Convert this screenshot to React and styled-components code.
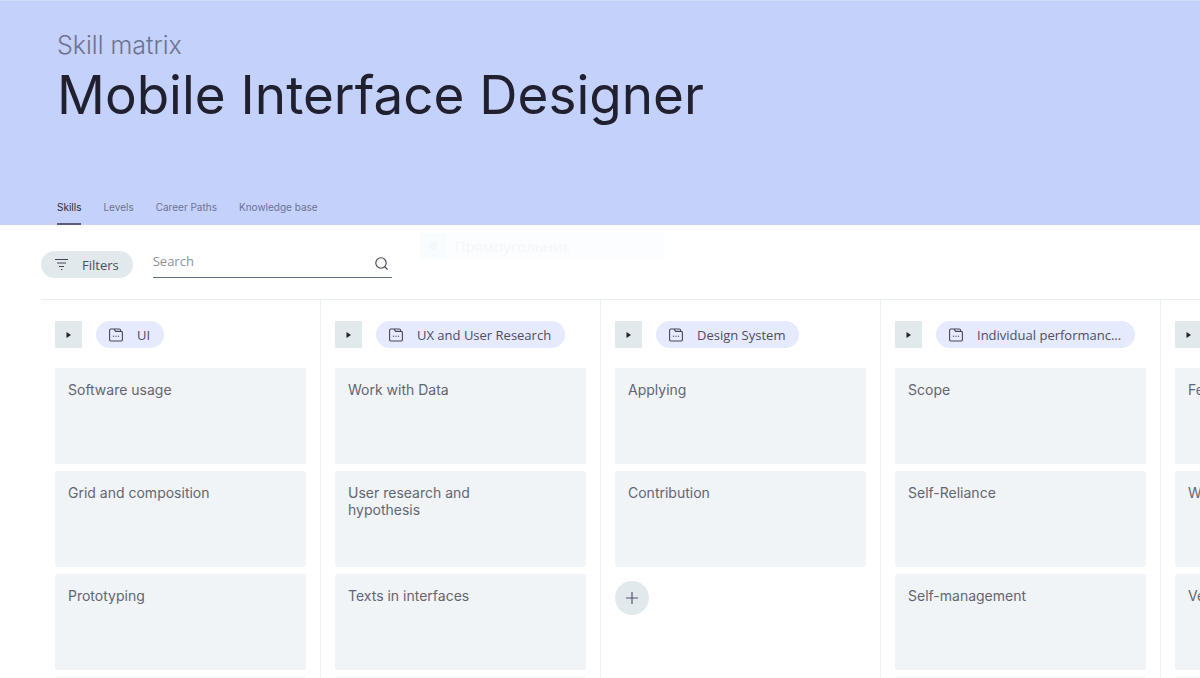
import React from 'react'
import styled, { createGlobalStyle } from 'styled-components'

const GlobalStyle = createGlobalStyle`
	* {
		box-sizing: border-box;
	}
	body {
		margin: 0;
		background: #fff;
		color: #20202f;
		font-family: Inter, "Liberation Sans", sans-serif;
	}
	button, input {
		font-family: "Open Sans", "Noto Sans", sans-serif;
		font-size: 13px;
		color: #4c4d60;
	}
	button {
		border: 0;
		padding: 0;
		cursor: pointer;
	}
`

const Page = styled.div`
	display: flex;
	flex-direction: column;
	height: 100vh;
`

const Header = styled.header`
	display: flex;
	flex-direction: column;
	flex-shrink: 0;
	padding: 29px 57px 0;
	background: #c4d1fb;
	border-top: 1px solid #d2dbfc;
`

const Subtitle = styled.p`
	margin: 0;
	font-size: 25px;
	font-weight: 300;
	line-height: 30px;
	color: #6d7392;
`

const Title = styled.h1`
	margin: 0 0 70px;
	font-size: 53px;
	font-weight: 400;
	line-height: 70px;
`

const Tabs = styled.nav`
	display: flex;
	gap: 22px;
`

const Tab = styled.a`
	height: 25px;
	font-size: 10px;
	line-height: 14px;
	text-decoration: none;
	color: ${props => (props.$active ? '#2c2c3e' : '#6d7392')};
	border-bottom: 2px solid ${props => (props.$active ? '#5b5c78' : 'transparent')};
`

const Toolbar = styled.div`
	display: flex;
	flex-shrink: 0;
	align-items: flex-end;
	gap: 20px;
	padding: 8px 41px 21px;
`

const FilterButton = styled.button`
	display: flex;
	align-items: center;
	gap: 14px;
	height: 27px;
	padding: 0 14px;
	border-radius: 14px;
	background: #e2e9ec;
`

const SearchField = styled.label`
	display: flex;
	align-items: center;
	width: 239px;
	height: 28px;
	padding-right: 4px;
	border-bottom: 1px solid #5f6f83;
`

const SearchInput = styled.input`
	flex: 1;
	min-width: 0;
	height: 27px;
	padding: 0 0 6px;
	border: 0;
	outline: 0;
	background: transparent;
	&::placeholder {
		color: #8e8f99;
		opacity: 1;
	}
`

const DragGhost = styled.div`
	display: flex;
	align-self: flex-start;
	align-items: center;
	width: 244px;
	height: 26px;
	margin: 0 0 19px 8px;
	background: #fcfdff;
	font-family: "Open Sans", "Noto Sans", sans-serif;
	font-size: 15px;
	color: #f5f6f7;
`

const DragHandle = styled.span`
	display: flex;
	align-items: center;
	justify-content: center;
	width: 26px;
	height: 26px;
	margin-right: 9px;
	background: #f8fcff;
	&::before {
		content: '';
		width: 8px;
		height: 8px;
		border-radius: 50%;
		background: #f5f6f7;
	}
`

const Board = styled.main`
	display: flex;
	flex: 1;
	min-height: 0;
	margin-left: 41px;
	border-top: 1px solid #eaeff1;
	overflow: auto;
	scrollbar-width: none;
`

const Column = styled.section`
	flex: 0 0 280px;
	height: max-content;
	min-height: 100%;
	padding: 21px 14px;
	border-right: 1px solid #eaf0f3;
`

const ColumnHead = styled.div`
	display: flex;
	gap: 14px;
	margin-bottom: 20px;
`

const ToggleButton = styled.button`
	display: flex;
	flex: 0 0 27px;
	align-items: center;
	justify-content: center;
	height: 27px;
	border-radius: 1px;
	background: #e2e9ec;
`

const Category = styled.button`
	display: flex;
	align-items: center;
	gap: 14px;
	height: 27px;
	padding: 0 14px 0 13px;
	border-radius: 14px;
	background: #e6eaff;
	white-space: nowrap;
`

const Cards = styled.ul`
	display: flex;
	flex-direction: column;
	gap: 7px;
	margin: 0;
	padding: 0;
	list-style: none;
`

const Card = styled.li`
	min-height: 96px;
	padding: 13px 80px 13px 13px;
	border-radius: 2px;
	background: #f0f4f7;
	font-size: 14px;
	line-height: 17px;
	color: #646572;
`

const AddButton = styled.button`
	display: flex;
	align-items: center;
	justify-content: center;
	width: 34px;
	height: 34px;
	margin-top: 14px;
	border-radius: 50%;
	background: #e2e9ec;
`

const FilterIcon = () => (
	<svg width="13" height="13" viewBox="0 0 13 13" fill="none" stroke="#45465a" strokeWidth="1">
		<path d="M0 1.5h13M2 5h9M4 8.5h5M6 11.5h1.4" />
	</svg>
)

const SearchIcon = () => (
	<svg width="13" height="13" viewBox="0 0 13 13" fill="none" stroke="#3c3d50" strokeWidth="1.1">
		<circle cx="6" cy="6" r="5.2" />
		<path d="M9.7 9.7l2.8 2.8" />
	</svg>
)

const ArrowIcon = () => (
	<svg width="5" height="6" viewBox="0 0 5 6">
		<path d="M.5 0L5 3L.5 6z" fill="#20202f" />
	</svg>
)

const FolderIcon = () => (
	<svg width="14" height="14" viewBox="0 0 14 14" fill="none" stroke="#45465c" strokeWidth="1.1">
		<path d="M.6 11.8V2.100Q.6 1 1.700 1h2.700q.5 0 .8.400L6.600 3.400h5.600q1.200 0 1.200 1.200v7.200q0 1.200-1.200 1.200H1.800Q.6 13 .6 11.800z" />
		<path d="M5 1h5.200q1.200 0 1.400 1.200v1" />
		<path d="M3.900 8.300h1.200M6.400 8.300h1.200M8.900 8.300h1.200" />
	</svg>
)

const PlusIcon = () => (
	<svg width="12" height="12" viewBox="0 0 12 12" stroke="#55566a" strokeWidth="1.2">
		<path d="M6 0v12M0 6h12" />
	</svg>
)

const tabs = ['Skills', 'Levels', 'Career Paths', 'Knowledge base']

const columns = [
	{ title: 'UI', skills: ['Software usage', 'Grid and composition', 'Prototyping', ''] },
	{ title: 'UX and User Research', skills: ['Work with Data', 'User research and hypothesis', 'Texts in interfaces', ''] },
	{ title: 'Design System', skills: ['Applying', 'Contribution'], canAdd: true },
	{ title: 'Individual performanc...', skills: ['Scope', 'Self-Reliance', 'Self-management', ''] },
	{ title: '', skills: ['Fe', 'W', 'Ve', ''] },
]

const App = () => {
	return (
		<Page>
			<GlobalStyle />
			<Header>
				<Subtitle>Skill matrix</Subtitle>
				<Title>Mobile Interface Designer</Title>
				<Tabs>
					{tabs.map((tab, i) => (
						<Tab key={tab} href="#" $active={i === 0}>{tab}</Tab>
					))}
				</Tabs>
			</Header>

			<Toolbar>
				<FilterButton type="button">
					<FilterIcon />
					Filters
				</FilterButton>
				<SearchField>
					<SearchInput type="text" placeholder="Search" aria-label="Search" />
					<SearchIcon />
				</SearchField>
				<DragGhost>
					<DragHandle />
					Прямоугольник
				</DragGhost>
			</Toolbar>

			<Board>
				{columns.map((column, i) => (
					<Column key={i}>
						<ColumnHead>
							<ToggleButton type="button" aria-label="Expand">
								<ArrowIcon />
							</ToggleButton>
							{column.title && (
								<Category type="button">
									<FolderIcon />
									{column.title}
								</Category>
							)}
						</ColumnHead>
						<Cards>
							{column.skills.map((skill, n) => (
								<Card key={n}>{skill}</Card>
							))}
						</Cards>
						{column.canAdd && (
							<AddButton type="button" aria-label="Add skill">
								<PlusIcon />
							</AddButton>
						)}
					</Column>
				))}
			</Board>
		</Page>
	)
}

export default App
